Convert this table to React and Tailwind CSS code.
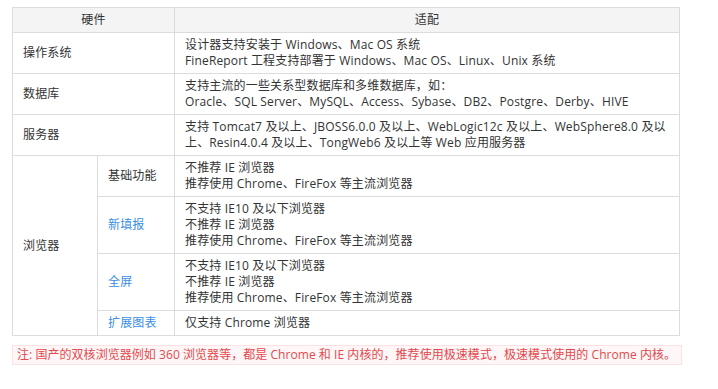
const rows = [
  {
    name: "操作系统",
    lines: [
      "设计器支持安装于 Windows、Mac OS 系统",
      "FineReport 工程支持部署于 Windows、Mac OS、Linux、Unix 系统",
    ],
  },
  {
    name: "数据库",
    lines: [
      "支持主流的一些关系型数据库和多维数据库，如：",
      "Oracle、SQL Server、MySQL、Access、Sybase、DB2、Postgre、Derby、HIVE",
    ],
  },
  {
    name: "服务器",
    lines: [
      "支持 Tomcat7 及以上、JBOSS6.0.0 及以上、WebLogic12c 及以上、WebSphere8.0 及以",
      "上、Resin4.0.4 及以上、TongWeb6 及以上等 Web 应用服务器",
    ],
  },
];

const browsers = [
  {
    name: "基础功能",
    link: false,
    lines: ["不推荐 IE 浏览器", "推荐使用 Chrome、FireFox 等主流浏览器"],
  },
  {
    name: "新填报",
    link: true,
    lines: [
      "不支持 IE10 及以下浏览器",
      "不推荐 IE 浏览器",
      "推荐使用 Chrome、FireFox 等主流浏览器",
    ],
  },
  {
    name: "全屏",
    link: true,
    lines: [
      "不支持 IE10 及以下浏览器",
      "不推荐 IE 浏览器",
      "推荐使用 Chrome、FireFox 等主流浏览器",
    ],
  },
  {
    name: "扩展图表",
    link: true,
    lines: ["仅支持 Chrome 浏览器"],
  },
];

function Lines({ lines }) {
  return lines.map((l, i) => (
    <div key={i} className="whitespace-nowrap">
      {l}
    </div>
  ));
}

export default function App() {
  const cell = "border border-[#dcdcdc] px-[10px] py-[4px] align-middle";

  return (
    <div
      className="w-[718px] h-[389px] bg-white pt-[7px] pl-[12px] text-[12px] leading-[16px] text-[#333]"
      style={{ fontFamily: '"Open Sans", "Noto Sans CJK SC", sans-serif' }}
    >
      <table className="w-[668px] border-collapse table-fixed tracking-[0.15px]">
        <colgroup>
          <col className="w-[85px]" />
          <col className="w-[77px]" />
          <col />
        </colgroup>
        <thead>
          <tr className="bg-[#f4f4f4]">
            <th colSpan={2} className={`${cell} font-normal text-center`}>
              硬件
            </th>
            <th className={`${cell} font-normal text-center`}>适配</th>
          </tr>
        </thead>
        <tbody>
          {rows.map((r) => (
            <tr key={r.name}>
              <td colSpan={2} className={cell}>
                {r.name}
              </td>
              <td className={cell}>
                <Lines lines={r.lines} />
              </td>
            </tr>
          ))}
          {browsers.map((b, i) => (
            <tr key={b.name}>
              {i === 0 && (
                <td rowSpan={browsers.length} className={cell}>
                  浏览器
                </td>
              )}
              <td className={`${cell} ${b.link ? "text-[#3a8ee6]" : ""}`}>
                {b.name}
              </td>
              <td className={cell}>
                <Lines lines={b.lines} />
              </td>
            </tr>
          ))}
        </tbody>
      </table>

      {/* NOTE */}
      <div className="mt-[9px] w-[670px] h-[20px] border border-[#fbe3e3] bg-[#fff7f7] px-[4px] leading-[18px] text-[#e5484d] whitespace-nowrap tracking-[0.05px]">
        注: 国产的双核浏览器例如 360 浏览器等，都是 Chrome 和 IE 内核的，推荐使用极速模式，极速模式使用的 Chrome 内核。
      </div>
    </div>
  );
}
